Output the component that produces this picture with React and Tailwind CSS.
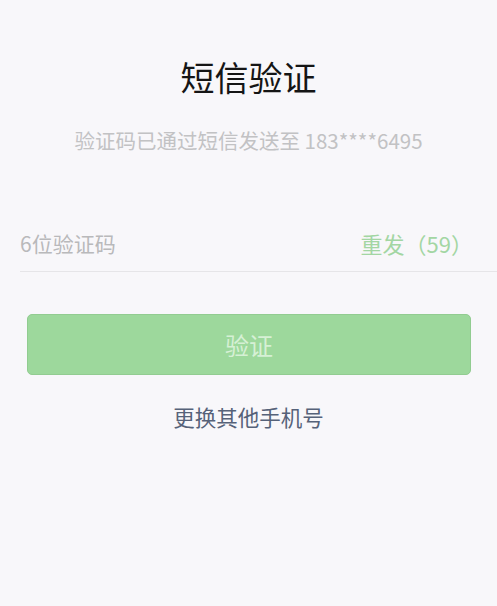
export default function App() {
  const font = { fontFamily: '"Noto Sans CJK SC", "Noto Sans", sans-serif' };
  return (
    <div className="min-h-[606px] w-full bg-[#f8f7fa] flex flex-col" style={font}>
      <div className="mt-[57px] h-[40px] flex items-center justify-center text-[34px] leading-none text-[#151515]">
        短信验证
      </div>
      <div className="mt-[31px] h-[24px] flex items-center justify-center text-[20.5px] leading-none text-[#c2c2c4]">
        验证码已通过短信发送至 183****6495
      </div>
      <div className="mt-[63px] ml-[20px] h-[57px] flex items-center justify-between border-b border-[#e6e5e8] pr-[24px]">
        <span className="text-[21px] leading-none text-[#b9b9bb]">6位验证码</span>
        <span className="text-[22px] leading-none text-[#a3d6a3]">重发（59）</span>
      </div>
      <div className="mt-[42px] ml-[27px] mr-[26px] h-[61px] rounded-[5px] bg-[#9dd89c] border border-[#92cc91] flex items-center justify-center text-[24px] leading-none text-[#d6f0d5]">
        验证
      </div>
      <div className="mt-[28px] h-[28px] flex items-center justify-center text-[21.5px] leading-none text-[#566279]">
        更换其他手机号
      </div>
    </div>
  );
}
